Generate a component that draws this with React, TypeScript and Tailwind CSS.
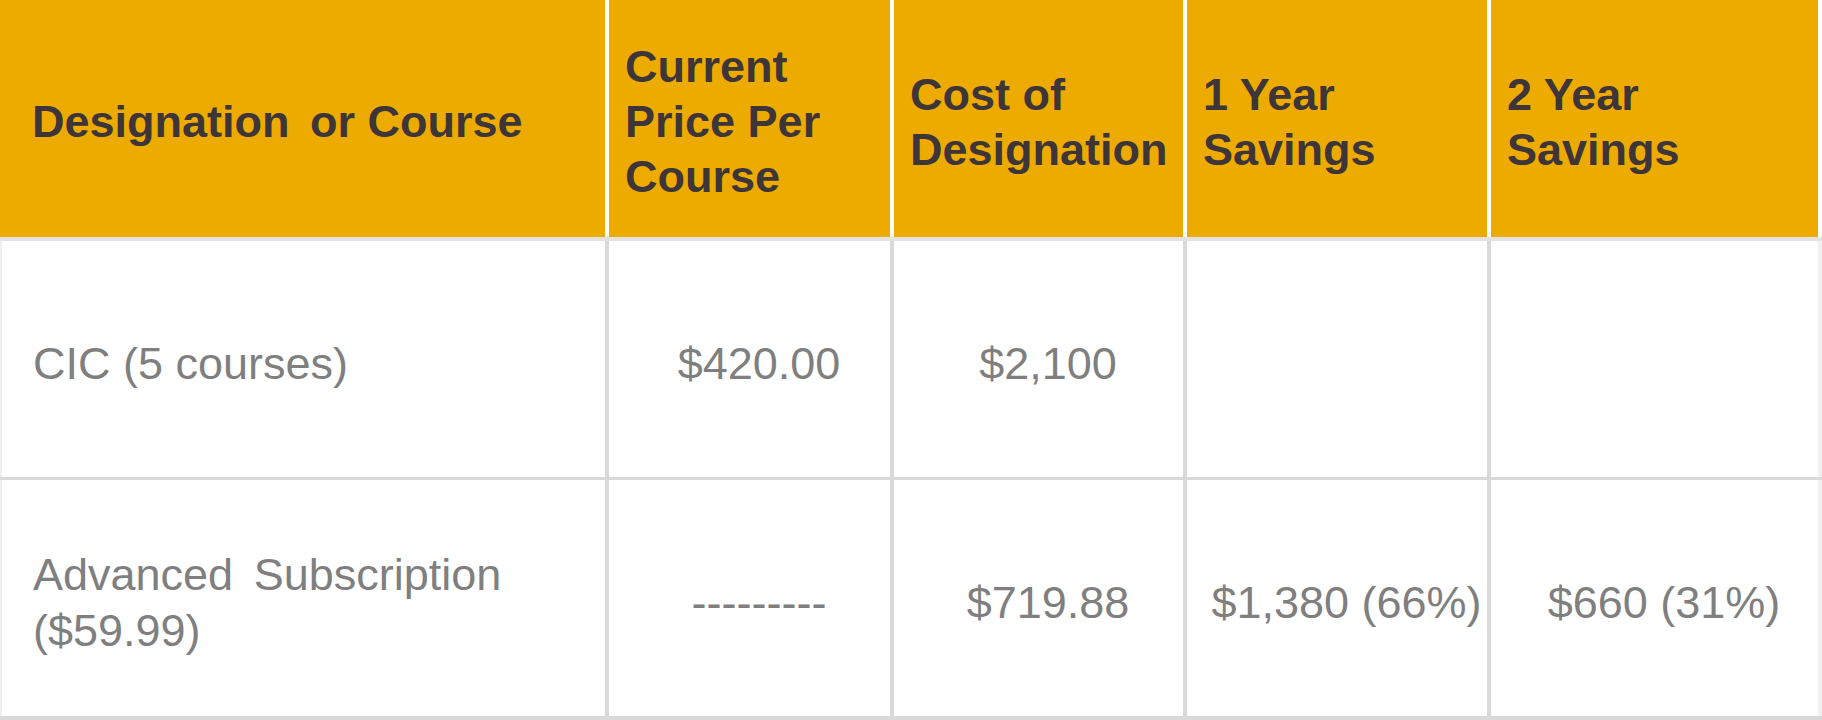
const COLS = "grid grid-cols-[609px_285px_293px_304px_331px]";

const headCell = "flex items-center bg-[#edab00] pt-[6px] pl-[16px] pr-[6px] border-r-4 border-white";
const bodyCell = "flex items-center justify-center pt-[10px] pl-[19px] border-r-4 border-[#d9d9d9] whitespace-nowrap";

export default function App() {
  return (
    <div className="w-[1822px] h-[720px] bg-white font-['Liberation_Sans',Arial,sans-serif] text-[45px]">
      {/* header */}
      <div className={`${COLS} h-[241px] border-b-4 border-[#e2e2e2] font-bold leading-[55px] text-[#3d3537]`}>
        <div className={`${headCell} pl-[32px]`}>
          <span>
            Designation <span className="ml-[8px]">or Course</span>
          </span>
        </div>
        <div className={headCell}>Current Price Per Course</div>
        <div className={headCell}>Cost of Designation</div>
        <div className={headCell}>1 Year Savings</div>
        <div className={`${headCell} border-[#f3f3f3]`}>2 Year Savings</div>
      </div>

      {/* CIC */}
      <div className={`${COLS} h-[239px] border-b-[3px] border-[#d9d9d9] leading-[56px] text-[#7f7f7f]`}>
        <div className={`${bodyCell} justify-start pl-[31px] border-l-2 border-l-[#efefef]`}>CIC (5 courses)</div>
        <div className={bodyCell}>$420.00</div>
        <div className={bodyCell}>$2,100</div>
        <div className={bodyCell}></div>
        <div className={`${bodyCell} border-r-[#f1f1f1]`}></div>
      </div>

      {/* subscription */}
      <div className={`${COLS} h-[240px] border-b-4 border-[#d9d9d9] leading-[56px] text-[#7f7f7f]`}>
        <div className="flex items-center pt-[10px] pl-[31px] pr-[20px] border-r-4 border-[#d9d9d9] border-l-2 border-l-[#efefef]">
          <span>
            Advanced <span className="ml-[8px]">Subscription</span> ($59.99)
          </span>
        </div>
        <div className={bodyCell}>---------</div>
        <div className={bodyCell}>$719.88</div>
        <div className={bodyCell}>$1,380 (66%)</div>
        <div className={`${bodyCell} border-r-[#f1f1f1]`}>$660 (31%)</div>
      </div>
    </div>
  );
}
